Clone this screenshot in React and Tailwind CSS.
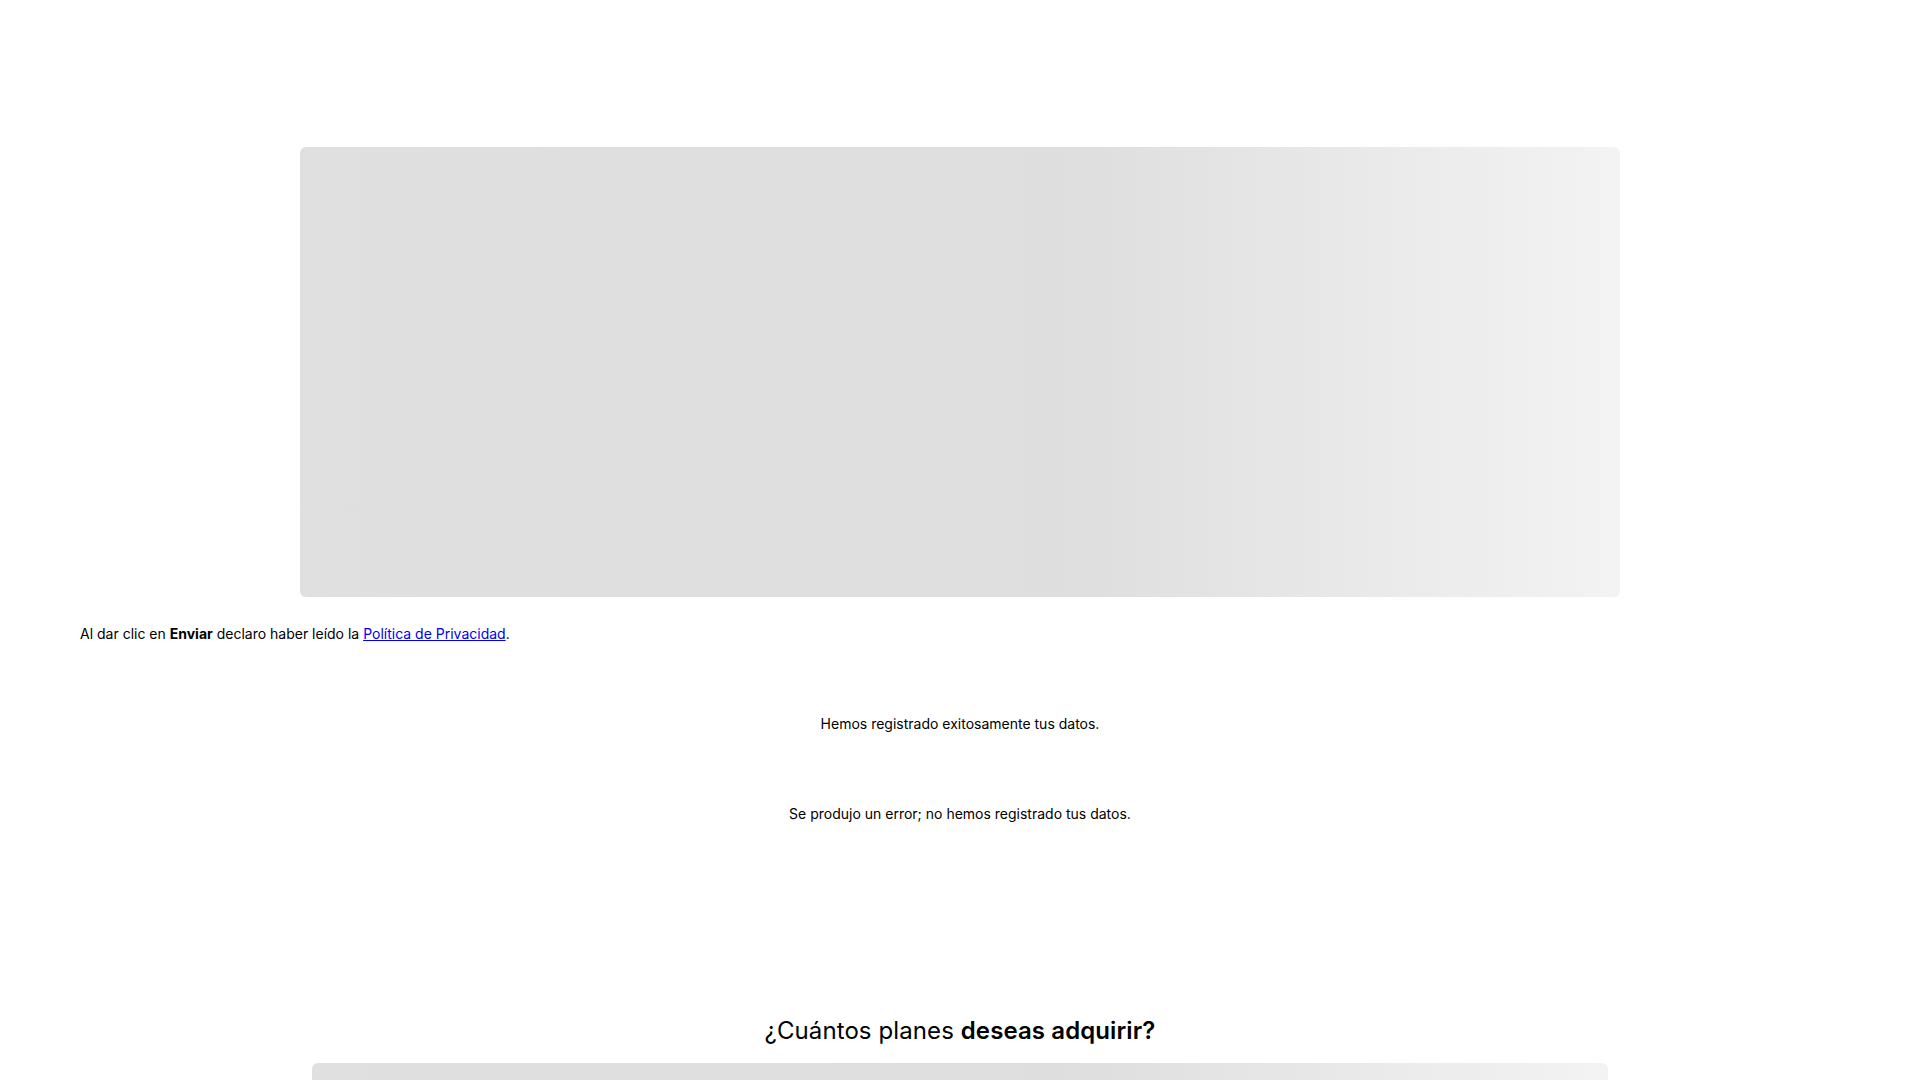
import React from 'react';

function Skeleton({ className }) {
    return (
        <div className={`bg-linear-to-r from-[#e0e0e0] via-[#dedede] via-58% to-[#f3f3f3] ${className}`} />
    );
}

export default function App() {
    return (
        <div className="min-h-screen bg-white text-black font-['Inter','Liberation_Sans',sans-serif]">
            {/* Form placeholder */}
            <div className="pt-[147px] flex justify-center">
                <Skeleton className="w-[1320px] h-[450px] rounded-[6px]" />
            </div>

            <p className="px-20 mt-[27px] text-sm leading-5 text-black">
                Al dar clic en <b className="font-bold">Enviar</b> declaro haber leído la{' '}
                <a href="#" className="text-[#0000ee] underline">Política de Privacidad</a>.
            </p>

            {/* Status messages */}
            <p className="mt-[70px] text-center text-sm leading-5 text-black">
                Hemos registrado exitosamente tus datos.
            </p>
            <p className="mt-[70px] text-center text-sm leading-5 text-black">
                Se produjo un error; no hemos registrado tus datos.
            </p>

            {/* Plans */}
            <h2 className="mt-[191px] text-center text-2xl leading-8 font-normal tracking-[0.1px]">
                ¿Cuántos planes <span className="font-semibold">deseas adquirir?</span>
            </h2>
            <div className="mt-4 flex justify-center">
                <Skeleton className="w-[1296px] h-[300px] rounded-[6px]" />
            </div>
        </div>
    );
}
